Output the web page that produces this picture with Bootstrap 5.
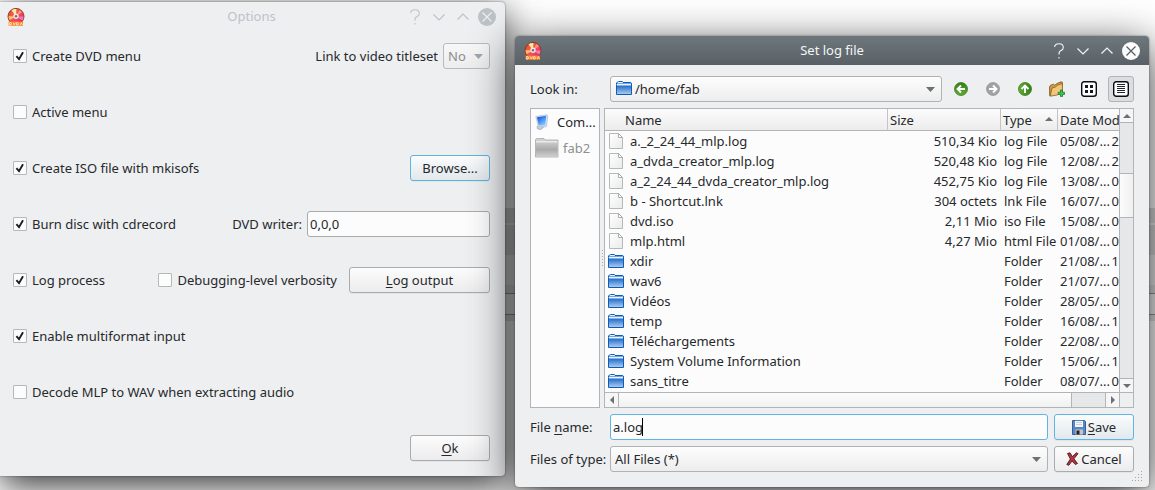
<!DOCTYPE html>
<html lang="en">
<head>
<meta charset="utf-8">
<meta name="viewport" content="width=device-width, initial-scale=1">
<title>Set log file</title>
<link href="https://cdn.jsdelivr.net/npm/bootstrap@5.3.0/dist/css/bootstrap.min.css" rel="stylesheet">
<style>
:root{--ink:#26292c;--face:#eeeff1;--edge:#b2b4b5}
body{font:13px/18px "Noto Sans",sans-serif;color:var(--ink);min-height:100vh;padding:2px 6px 0 0;gap:10px;
  background:linear-gradient(#fff 0 208px,#dcdcdc 208px 223px,#f0f0f0 223px 225px,#d8d8d8 225px 255px,#ececec 255px 285px,#dedede 285px 293px,#999 293px 294px,#f4f4f4 294px 314px,#999 314px 315px,#e4e4e4 315px 321px,#fff 321px)}
.win{min-width:0;background:var(--face);border-radius:4px;position:relative}
.win-options{flex:505 1 0;border-radius:0 4px 4px 0;box-shadow:0 10px 36px rgba(0,0,0,.8),0 0 2px rgba(0,0,0,.5)}
.win-file{flex:634 1 0;margin-top:34px;box-shadow:0 10px 44px rgba(0,0,0,.8),0 0 2px rgba(0,0,0,.5)}
.bar{display:grid;grid-template-columns:1fr auto 1fr;align-items:center;height:29px;padding:0 9px}
.bar h1{font-size:13px;line-height:18px;margin:0;padding-bottom:1px;font-weight:400}
.win-options .bar{color:#bdc3c7;padding-left:7px}
.win-file .bar{color:#f4f5f5;background:linear-gradient(#6e777c,#596166);border-radius:4px 4px 0 0}
.winbtn{border:0;background:none;padding:0;width:18px;height:18px;color:inherit;display:block}
svg{display:block;flex:none}
.opts{padding:12px 15px 15px 13px;gap:30px}
.opts>div{min-height:26px}
.tick{appearance:none;width:14px;height:14px;margin:0;border:1px solid #b6b8b8;border-radius:1px;background:#fcfcfc center/12px no-repeat;flex:none}
.tick:checked{background-image:url("data:image/svg+xml,%3Csvg xmlns='http://www.w3.org/2000/svg' viewBox='0 0 12 12'%3E%3Cpath d='M2.4 6.2L5 9.2L9 2.2' fill='none' stroke='%231c1f21' stroke-width='1.9'/%3E%3C/svg%3E")}
.tk{display:flex;align-items:center;gap:5px}
.pbtn{height:26px;padding:0;border:1px solid #a9abac;border-radius:3px;background:linear-gradient(#fcfcfc,#ececee);color:var(--ink);box-shadow:0 1px 0 rgba(0,0,0,.04);display:flex;align-items:center;justify-content:center}
.pbtn.hot{border-color:#5fb4e2;background:linear-gradient(#fbfcfd,#e1e8ec)}
.w80{width:80px;flex:none}.w141{width:141px;flex:none}
.field{height:26px;border:1px solid #a9abac;border-radius:3px;background:#fcfcfc;color:var(--ink);padding:0 2px;outline:0;min-width:0}
.field.hot{border-color:#5fb4e2}
.writer{width:183px}
.combo{appearance:none;height:26px;border:1px solid #b0b2b3;border-radius:3px;color:var(--ink);padding:0 20px 0 4px;min-width:0;
  background:url("data:image/svg+xml,%3Csvg xmlns='http://www.w3.org/2000/svg' viewBox='0 0 9 5'%3E%3Cpath d='M0 0H9L4.5 5Z' fill='%236d7072'/%3E%3C/svg%3E") right 6px center/9px 5px no-repeat,linear-gradient(#fdfdfd,#ededee)}
.combo:disabled{color:#8b8e90;opacity:1;width:47px;border-color:#b9bbbc;
  background:url("data:image/svg+xml,%3Csvg xmlns='http://www.w3.org/2000/svg' viewBox='0 0 9 5'%3E%3Cpath d='M0 0H9L4.5 5Z' fill='%23a3a6a8'/%3E%3C/svg%3E") right 6px center/9px 5px no-repeat,linear-gradient(#f7f7f8,#ededee)}
.place{padding-left:24px}
.over{position:absolute;left:6px;top:5px;pointer-events:none}
.caret{position:absolute;left:32px;top:4px;width:1px;height:18px;background:#000}
.fbody{padding:11px 15px 15px;gap:6px}
.lab{width:80px;flex:none}
.tool{width:26px;height:26px;padding:0;border:0;background:none;display:grid;place-items:center;flex:none}
.tool.on{border:1px solid #b2b4b5;background:#dcddde;border-radius:3px}
.pane{border:1px solid var(--edge);background:#fcfcfc;height:300px}
.side{width:70px;flex:none}
.side a{display:flex;align-items:center;color:var(--ink);text-decoration:none;height:26px}
.side .dim{color:#8d8f90}
.split{width:4px;flex:none;display:grid;place-items:center}
.split i{width:1px;height:17px;background:repeating-linear-gradient(#aaa 0 1px,transparent 1px 3px)}
.lst{table-layout:fixed;width:100%;border-collapse:separate;border-spacing:0}
.lst th{height:22px;padding:0 0 0 2px;font-weight:400;background:linear-gradient(#fcfcfc,#ececed);border-bottom:1px solid var(--edge);border-left:1px solid #c2c4c5;white-space:nowrap}
.lst th:first-child{padding-left:20px;border-left:0}
.lst td{height:20px;padding:0 0 0 3px;white-space:nowrap;line-height:18px}
.lst td:nth-child(2){text-align:right;padding-right:3px}
.lst td:nth-child(3){padding-left:4px}
.lst .c2{width:113px}.lst .c3{width:57px}.lst .c4{width:62px}
.sort{float:right;margin:6px 4px 0 0}
.vsb{width:14px;flex:none;border-left:1px solid var(--edge);background:#e6e7e8}
.hsb{height:15px;border-top:1px solid var(--edge);background:#e6e7e8}
.sbb{border:0;padding:0;background:#f6f6f7;display:grid;place-items:center;flex:none}
.vsb .sbb{height:14px;width:100%}.hsb .sbb{width:14px}
.vsb .sbb:first-child{border-bottom:1px solid var(--edge)}.vsb .sbb:last-child{border-top:1px solid var(--edge)}
.hsb .first{border-right:1px solid var(--edge)}.hsb .last{border-left:1px solid var(--edge)}
.vthumb{height:45px;margin-top:50px;border:solid var(--edge);border-width:1px 0;background:linear-gradient(90deg,#fcfcfc,#f0f0f1)}
.hthumb{flex:1 1 0;border-right:1px solid var(--edge);background:linear-gradient(#fcfcfc,#f0f1f1)}
.hgap{flex:0 0 33px}
.corner{width:14px;border-left:1px solid var(--edge);background:var(--face)}
.grip{position:absolute;right:6px;bottom:5px}
.g6{gap:6px}.g2{gap:2px}
u{text-underline-offset:2px}
</style>
</head>
<body class="d-flex align-items-start">
<svg width="0" height="0" class="position-absolute" aria-hidden="true">
  <defs>
    <linearGradient id="gb" x2="0" y2="1"><stop stop-color="#1f6bc8"/><stop offset="1" stop-color="#a9c9ef"/></linearGradient>
    <linearGradient id="gg" x2="0" y2="1"><stop stop-color="#c9c9c9"/><stop offset=".5" stop-color="#a9aaa9"/><stop offset="1" stop-color="#cfcfcf"/></linearGradient>
    <linearGradient id="gf" x2="1" y2="1"><stop stop-color="#fff"/><stop offset="1" stop-color="#e9eaea"/></linearGradient>
    <linearGradient id="gn" x2="0" y2="1"><stop stop-color="#2f7f14"/><stop offset="1" stop-color="#63ad35"/></linearGradient>
    <linearGradient id="gs" x1=".2" x2=".9" y2="1"><stop stop-color="#2446d8"/><stop offset=".5" stop-color="#4a9cf4"/><stop offset="1" stop-color="#9fd4fb"/></linearGradient>
    <linearGradient id="gd" x2="1" y2=".7"><stop stop-color="#d2322a"/><stop offset=".35" stop-color="#f2603a"/><stop offset=".65" stop-color="#ee4b5a"/><stop offset="1" stop-color="#dc2f6c"/></linearGradient>
  </defs>
  <symbol id="disc" viewBox="0 0 18 18">
    <circle cx="9" cy="8.4" r="8" fill="url(#gd)" stroke="#8a2f28" stroke-width=".9"/>
    <path d="M9 8.400L4.500 2.200A7.500 7.500 0 0 1 9.400 1Z" fill="#ffe9a6"/>
    <path d="M9 8.400L1.600 8.200A7.500 7.500 0 0 0 2.600 12Z" fill="#ffc46a"/>
    <path d="M9 8.400L12.500 2A7.500 7.500 0 0 1 15 4.300Z" fill="#ff9a70"/>
    <path d="M9 8.400L16.500 8.500A7.500 7.500 0 0 1 15.400 12.500Z" fill="#f07bb5"/>
    <circle cx="9" cy="8.2" r="2.700" fill="#fbdfe4"/><circle cx="9" cy="8.2" r="1.200" fill="#6f6a95"/>
    <path d="M1.600 13.600H16V17.800H1.600Z" fill="#ff8126"/>
    <path d="M2.600 14.600V17M2.600 14.600H4Q5.200 15.800 4 17H2.600M6.200 14.600L7.300 17 8.400 14.600M9.600 14.600V17M9.600 14.600H10.900Q12 15.800 10.900 17H9.600M13.200 17L14.300 14.600 15.400 17" fill="none" stroke="#fff3dd" stroke-width=".8"/>
  </symbol>
  <symbol id="folder" viewBox="0 0 16 14">
    <path d="M.5 3.500V1.800L1.400 1.200H2L2.600.5H6.400L7 1.500H14.800L15.500 2.200V13.500H.500Z" fill="#e9f2fd" stroke="#0c5cba"/>
    <path d="M1 4.500H15V13H1Z" fill="url(#gb)"/>
    <path d="M1 2.500H15" stroke="#6fa6e4"/>
  </symbol>
  <symbol id="file" viewBox="0 0 14 16">
    <path d="M.5.500H9.500L13.500 4.500V15.500H.500Z" fill="url(#gf)" stroke="#b6b8b9"/>
    <path d="M9.500.500V4.500H13.500Z" fill="#fff" stroke="#999b9c" stroke-width=".8"/>
  </symbol>
  <symbol id="up" viewBox="0 0 8 4"><path d="M0 4L4 0 8 4Z" fill="#6d7072"/></symbol>
  <symbol id="help" viewBox="0 0 18 18"><path d="M4.700 5Q4.700 1.800 9 1.800T13.300 5.500Q13.300 7.500 11 8.500T9 12.500M9 15V16.500" fill="none" stroke="currentColor" stroke-width="1.100"/></symbol>
  <symbol id="min" viewBox="0 0 18 18"><path d="M3.500 6.500L9 12 14.500 6.500" fill="none" stroke="currentColor" stroke-width="1.200"/></symbol>
  <symbol id="max" viewBox="0 0 18 18"><path d="M3.500 11.500L9 6 14.500 11.500" fill="none" stroke="currentColor" stroke-width="1.200"/></symbol>
  <symbol id="arrow" viewBox="0 0 14 14"><circle cx="7" cy="7" r="6.500"/><path d="M11 7H4M7 3.500L3.500 7 7 10.500" fill="none" stroke="#fff" stroke-width="1.900"/></symbol>
</svg>

<section class="win win-options" aria-label="Options">
  <header class="bar">
    <svg width="18" height="18"><use href="#disc"/></svg>
    <h1>Options</h1>
    <div class="d-flex justify-content-end g6">
      <button class="winbtn" aria-label="Help"><svg width="18" height="18"><use href="#help"/></svg></button>
      <button class="winbtn" aria-label="Minimize"><svg width="18" height="18"><use href="#min"/></svg></button>
      <button class="winbtn" aria-label="Maximize"><svg width="18" height="18"><use href="#max"/></svg></button>
      <button class="winbtn" aria-label="Close"><svg width="18" height="18"><circle cx="9" cy="9" r="9" fill="#bdc3c7"/><path d="M4.500 4.500L13.500 13.500M13.500 4.500L4.500 13.500" stroke="#eff0f1" stroke-width="1.200"/></svg></button>
    </div>
  </header>
  <form class="opts d-flex flex-column">
    <div class="d-flex align-items-center justify-content-between">
      <label class="tk"><input type="checkbox" class="tick" checked>Create DVD menu</label>
      <div class="tk"><label for="ts">Link to video titleset</label><select id="ts" class="combo" disabled><option>No</option></select></div>
    </div>
    <div class="d-flex align-items-center"><label class="tk"><input type="checkbox" class="tick">Active menu</label></div>
    <div class="d-flex align-items-center justify-content-between">
      <label class="tk"><input type="checkbox" class="tick" checked>Create ISO file with mkisofs</label>
      <button type="button" class="pbtn hot w80">Browse...</button>
    </div>
    <div class="d-flex align-items-center justify-content-between">
      <label class="tk"><input type="checkbox" class="tick" checked>Burn disc with cdrecord</label>
      <div class="tk"><label for="wr">DVD writer:</label><input id="wr" type="text" class="field writer" value="0,0,0"></div>
    </div>
    <div class="d-flex align-items-center">
      <label class="tk me-auto"><input type="checkbox" class="tick" checked>Log process</label>
      <label class="tk me-2 pe-1"><input type="checkbox" class="tick">Debugging-level verbosity</label>
      <button type="button" class="pbtn w141"><span><u>L</u>og output</span></button>
    </div>
    <div class="d-flex align-items-center"><label class="tk"><input type="checkbox" class="tick" checked>Enable multiformat input</label></div>
    <div class="d-flex align-items-center"><label class="tk"><input type="checkbox" class="tick">Decode MLP to WAV when extracting audio</label></div>
    <div class="d-flex justify-content-end"><button type="button" class="pbtn w80"><span><u>O</u>k</span></button></div>
  </form>
</section>

<section class="win win-file" aria-label="Set log file">
  <header class="bar">
    <svg width="18" height="18"><use href="#disc"/></svg>
    <h1>Set log file</h1>
    <div class="d-flex justify-content-end g6">
      <button class="winbtn" aria-label="Help"><svg width="18" height="18"><use href="#help"/></svg></button>
      <button class="winbtn" aria-label="Minimize"><svg width="18" height="18"><use href="#min"/></svg></button>
      <button class="winbtn" aria-label="Maximize"><svg width="18" height="18"><use href="#max"/></svg></button>
      <button class="winbtn" aria-label="Close"><svg width="18" height="18"><circle cx="9" cy="9" r="9" fill="#fbfbfb"/><path d="M4.500 4.500L13.500 13.500M13.500 4.500L4.500 13.500" stroke="#555d62" stroke-width="1.200"/></svg></button>
    </div>
  </header>
  <form class="fbody d-flex flex-column">
    <div class="d-flex align-items-center g6">
      <div class="d-flex flex-grow-1 align-items-center">
        <label class="lab" for="look">Look in:</label>
        <div class="position-relative flex-grow-1 d-flex"><select id="look" class="combo place w-100"><option>/home/fab</option></select><svg class="over" width="16" height="14"><use href="#folder"/></svg></div>
      </div>
      <div class="d-flex g6">
        <button type="button" class="tool" aria-label="Back"><svg width="14" height="14" fill="url(#gn)" stroke="#3d7d22" stroke-width=".8"><use href="#arrow"/></svg></button>
        <button type="button" class="tool" aria-label="Forward" disabled><svg width="14" height="14" fill="#a2a2a2" stroke="#989898" stroke-width=".8"><use href="#arrow" transform="rotate(180 7 7)"/></svg></button>
        <button type="button" class="tool" aria-label="Parent directory"><svg width="14" height="14" fill="url(#gn)" stroke="#3d7d22" stroke-width=".8"><use href="#arrow" transform="rotate(90 7 7)"/></svg></button>
        <button type="button" class="tool" aria-label="New folder"><svg width="16" height="16" viewBox="0 0 16 16">
          <path d="M.6 14.500V5.500L1.500 4.200 4.500 3.200 5.800 4.200 8 2.500 12 .800 13.400 1.300V4L12 12Z" fill="#cf9a48" stroke="#7a5318" stroke-width=".8"/>
          <path d="M1.200 15.200L3 7 6.500 6 8.500 4.200 13.400 2.600V12L8 14Z" fill="#f0c67a" stroke="#8a6020" stroke-width=".8"/>
          <path d="M11.500 9H13.500V11.300H15.600V13.400H13.500V15.600H11.500V13.400H9.200V11.300H11.500Z" fill="#41c75a" stroke="#137a28" stroke-width=".8"/></svg></button>
        <button type="button" class="tool" aria-label="List view"><svg width="16" height="16"><rect x=".7" y=".7" width="14.600" height="14.600" rx="2.500" fill="#fff" stroke="#0b0d12" stroke-width="1.400"/><path d="M4 4H7V7H4ZM9 4H12V7H9ZM4 9H7V12H4ZM9 9H12V12H9Z" fill="#15171a"/></svg></button>
        <button type="button" class="tool on" aria-label="Detail view"><svg width="16" height="16"><rect x=".7" y=".7" width="14.600" height="14.600" rx="2.500" fill="#fff" stroke="#0b0d12" stroke-width="1.400"/><path d="M4 3.500H12M4 5.500H12M4 7.500H12M4 9.500H12M4 11.500H12" stroke="#22252a"/></svg></button>
      </div>
    </div>
    <div class="d-flex">
      <nav class="pane side">
        <a href="#"><svg width="14" height="16" viewBox="0 0 14 16" class="ms-1 me-2"><path d="M2 12.500L4.500 11 8.500 13.500 6 15.500 2.500 15Z" fill="#c9cbd8" stroke="#9a9cae" stroke-width=".6"/><path d="M.8 2.500L12 .8 12.800 2 11.500 12.500 10.500 13 3 11.500Z" fill="#d5e4f6" stroke="#a4b4ce" stroke-width=".6"/><path d="M2 3.300L11.300 1.800 10.300 11.800 3.600 10.700Z" fill="url(#gs)"/></svg>Com...</a>
        <a href="#" class="dim"><svg width="24" height="20" viewBox="0 0 24 20" class="ms-1 me-1"><path d="M.5 3V1.500L2 .5H9L10.500 2H23V19H.500Z" fill="#d0d1d0" stroke="#a9aaa9" stroke-width=".8"/><path d="M1 4.500H22.600V18.600H1Z" fill="url(#gg)"/><path d="M1 3.800H22.500" stroke="#f4f4f4"/></svg>fab2</a>
      </nav>
      <div class="split"><i></i></div>
      <div class="pane flex-grow-1 d-flex flex-column overflow-hidden">
        <div class="d-flex flex-grow-1">
          <div class="flex-grow-1 overflow-hidden">
            <table class="lst">
              <colgroup><col><col class="c2"><col class="c3"><col class="c4"></colgroup>
              <thead><tr><th>Name</th><th>Size</th><th>Type<svg class="sort" width="8" height="4"><use href="#up"/></svg></th><th>Date Mod</th></tr></thead>
              <tbody id="rows"></tbody>
            </table>
          </div>
          <div class="vsb d-flex flex-column">
            <button type="button" class="sbb" aria-label="Scroll up"><svg width="8" height="4"><use href="#up"/></svg></button>
            <div class="vthumb"></div>
            <button type="button" class="sbb mt-auto" aria-label="Scroll down"><svg width="8" height="4"><use href="#up" transform="rotate(180 4 2)"/></svg></button>
          </div>
        </div>
        <div class="hsb d-flex">
          <button type="button" class="sbb first" aria-label="Scroll left"><svg width="4" height="8"><path d="M4 0L0 4 4 8Z" fill="#6d7072"/></svg></button>
          <div class="hthumb"></div><div class="hgap"></div>
          <button type="button" class="sbb last" aria-label="Scroll right"><svg width="4" height="8"><path d="M0 0L4 4 0 8Z" fill="#6d7072"/></svg></button>
          <div class="corner"></div>
        </div>
      </div>
    </div>
    <div class="d-flex align-items-center g6">
      <div class="d-flex flex-grow-1 align-items-center">
        <label class="lab" for="fn">File <u>n</u>ame:</label>
        <div class="position-relative flex-grow-1 d-flex"><input id="fn" type="text" class="field hot w-100" value="a.log"><i class="caret"></i></div>
      </div>
      <button type="button" class="pbtn hot w80 g2"><svg width="14" height="15" viewBox="0 0 14 15"><path d="M.5.500H12.500L13.500 1.500V14.500H.500Z" fill="#5a86c4" stroke="#34609f"/><path d="M3 .8H11V7H3Z" fill="#f3f5f8"/><path d="M4 2.500H10M4 4.500H10" stroke="#c3c9d2" stroke-width=".8"/><path d="M3.500 9.500H11V14.500H3.500Z" fill="#c8c6bc"/><path d="M4.500 10.500H7.500V14.500H4.500Z" fill="#222"/></svg><span><u>S</u>ave</span></button>
    </div>
    <div class="d-flex align-items-center g6">
      <div class="d-flex flex-grow-1 align-items-center">
        <label class="lab" for="ft">Files of type:</label>
        <select id="ft" class="combo flex-grow-1"><option>All Files (*)</option></select>
      </div>
      <button type="button" class="pbtn w80 g2"><svg width="13" height="14" viewBox="0 0 13 14"><path d="M1.500 1.500L4 .800 6.400 4.600 10.500 .700 12 1.700 7.900 6.800 11.500 11.500 9.300 12.500 6 9 2.800 13.300.800 12.500 4.400 7Z" fill="#b03540" stroke="#4e181c" stroke-width=".9"/></svg>Cancel</button>
    </div>
  </form>
  <svg class="grip" width="11" height="11" fill="#a3a5a6"><path d="M9 0h1v1h-1zM6 3h1v1h-1zM9 3h1v1h-1zM3 6h1v1h-1zM6 6h1v1h-1zM9 6h1v1h-1zM0 9h1v1h-1zM3 9h1v1h-1zM6 9h1v1h-1zM9 9h1v1h-1z"/></svg>
</section>

<script src="https://cdn.jsdelivr.net/npm/bootstrap@5.3.0/dist/js/bootstrap.bundle.min.js"></script>
<script>
const entries = [
  ["a._2_24_44_mlp.log","510,34 Kio","log File","05/08/...","2"],
  ["a_dvda_creator_mlp.log","520,48 Kio","log File","12/08/...","2"],
  ["a_2_24_44_dvda_creator_mlp.log","452,75 Kio","log File","13/08/...","0"],
  ["b - Shortcut.lnk","304 octets","lnk File","16/07/...","0"],
  ["dvd.iso","2,11 Mio","iso File","15/08/...","0"],
  ["mlp.html","4,27 Mio","html File","01/08/...","0"],
  ["xdir","","Folder","21/08/...","1"],
  ["wav6","","Folder","21/07/...","0"],
  ["Vidéos","","Folder","28/05/...","0"],
  ["temp","","Folder","16/08/...","1"],
  ["Téléchargements","","Folder","22/08/...","0"],
  ["System Volume Information","","Folder","15/06/...","1"],
  ["sans_titre","","Folder","08/07/...","0"]
];
document.getElementById("rows").innerHTML = entries.map(([name,size,type,date,hour]) => {
  const icon = type === "Folder"
    ? '<svg width="16" height="14"><use href="#folder"/></svg>'
    : '<svg width="16" height="16"><use href="#file"/></svg>';
  return `<tr><td><div class="d-flex align-items-center g6">${icon}<span>${name}</span></div></td><td>${size}</td><td>${type}</td><td><div class="d-flex justify-content-between"><span>${date}</span> <span>${hour}</span></div></td></tr>`;
}).join("");
</script>
</body>
</html>
